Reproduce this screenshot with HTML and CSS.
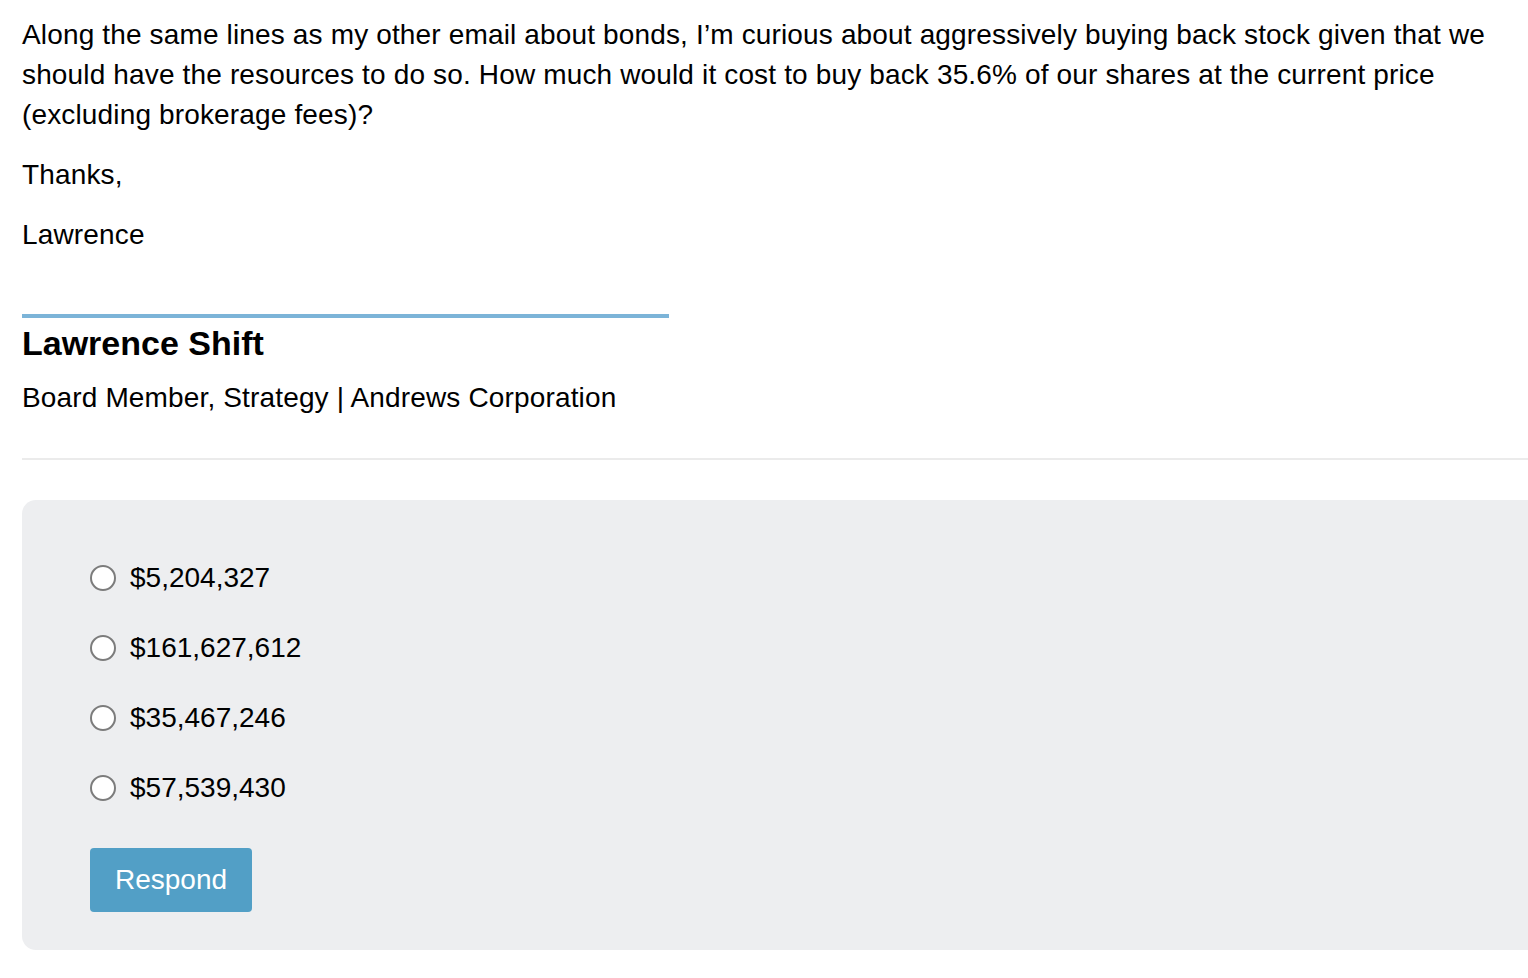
FILE: index.html
```html
<!DOCTYPE html>
<html>
<head>
<meta charset="utf-8">
<link rel="stylesheet" href="styles.css">
</head>
<body>
<div class="page">
  <div class="message">
    <p>Along the same lines as my other email about bonds, I’m curious about aggressively buying back stock given that we should have the resources to do so. How much would it cost to buy back 35.6% of our shares at the current price (excluding brokerage fees)?</p>
    <p>Thanks,</p>
    <p>Lawrence</p>
  </div>
  <div class="signature">
    <div class="sig-name">Lawrence Shift</div>
    <div class="sig-title">Board Member, Strategy | Andrews Corporation</div>
  </div>
  <div class="divider"></div>
  <form class="card">
    <label class="option"><input type="radio" name="ans"><span>$5,204,327</span></label>
    <label class="option"><input type="radio" name="ans"><span>$161,627,612</span></label>
    <label class="option"><input type="radio" name="ans"><span>$35,467,246</span></label>
    <label class="option"><input type="radio" name="ans"><span>$57,539,430</span></label>
    <button type="button" class="respond">Respond</button>
  </form>
</div>
</body>
</html>
```
FILE: styles.css
```css
html, body {
  margin: 0;
  padding: 0;
  overflow: hidden;
  background: #fff;
}
body {
  font-family: "Liberation Sans", Arial, Helvetica, sans-serif;
  color: #000;
  font-size: 28px;
  letter-spacing: 0.15px;
}
.page {
  width: 1560px;
  padding: 15px 0 0 22px;
}
.message {
  max-width: 1500px;
}
.message p {
  margin: 0 0 20px;
  line-height: 40px;
}
.signature {
  margin-top: 59px;
  width: 647px;
  border-top: 4px solid #7cb4d8;
  padding-top: 5px;
}
.sig-name {
  font-weight: bold;
  font-size: 34px;
  line-height: 40px;
  letter-spacing: 0;
}
.sig-title {
  margin-top: 15px;
  line-height: 40px;
}
.divider {
  margin-top: 40px;
  height: 2px;
  background: #ebebeb;
}
.card {
  margin: 40px 0 0;
  background: #edeef0;
  border-radius: 14px;
  padding: 58px 68px 38px;
  display: flex;
  flex-direction: column;
  align-items: flex-start;
  gap: 30px;
}
.option {
  display: flex;
  align-items: center;
  gap: 14px;
  height: 40px;
  line-height: 40px;
  letter-spacing: 0;
}
.option input {
  appearance: none;
  -webkit-appearance: none;
  margin: 0;
  width: 26px;
  height: 26px;
  border-radius: 50%;
  border: 2px solid #7c7c7c;
  background: #fff;
  box-sizing: border-box;
}
.respond {
  margin-top: 10px;
  height: 64px;
  padding: 0 25px;
  border: none;
  border-radius: 4px;
  background: #529fc6;
  color: #fff;
  font-family: inherit;
  font-size: 28px;
  letter-spacing: 0;
}
```
